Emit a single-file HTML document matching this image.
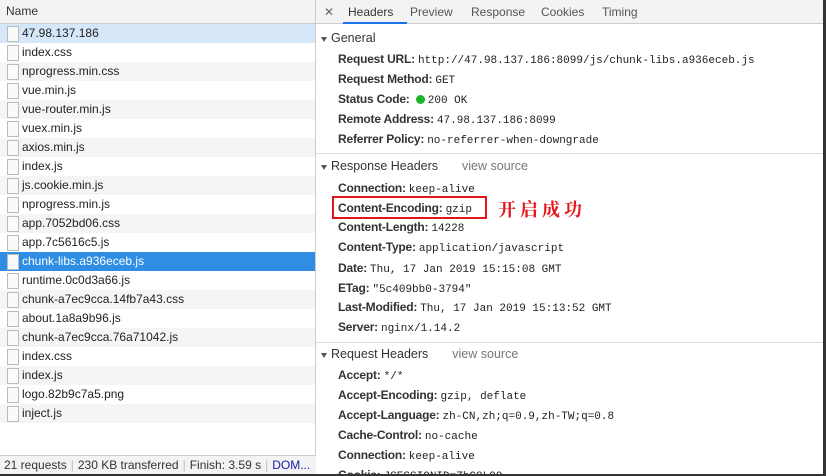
<!DOCTYPE html>
<html><head><meta charset="utf-8"><style>
*{margin:0;padding:0;box-sizing:border-box}
body{width:826px;height:476px;overflow:hidden;background:#fff;font-family:"Liberation Sans",sans-serif;font-size:12px;color:#222;position:relative}
#left{position:absolute;left:0;top:0;width:316px;height:474px;border-right:1px solid #ccc}
#lh{height:24px;background:#f3f3f3;border-bottom:1px solid #ccc;padding:4px 6px;color:#333}
.r{height:19px;line-height:19px;padding-left:22px;position:relative;white-space:nowrap;color:#222}
.r::before{content:"";position:absolute;left:7px;top:2px;width:10px;height:14px;border:1px solid #bbb;background:#fafafa}
.r.s1{background:#d6e7f9}
.r.s2{background:#2f8de4;color:#fff}
#foot{position:absolute;left:0;top:455px;width:316px;height:19px;border-top:1px solid #ccc;background:#f3f3f3;line-height:18px;padding-left:4px;color:#333;white-space:nowrap;overflow:hidden}
#foot i{font-style:normal;color:#bbb;margin:0 4px}
#right{position:absolute;left:316px;top:0;width:507px;height:474px;overflow:hidden}
#tabs{height:24px;background:#f3f3f3;border-bottom:1px solid #ccc;position:relative}
#tabs span{position:absolute;top:5px;color:#555}
#tabs .x{left:8px;color:#666}
#tabs .on{color:#333}
#ul{position:absolute;left:27px;top:22px;width:64px;height:2px;background:#1a73e8}
.st{position:absolute;left:15px;color:#333;font-size:12.5px}
.st::before{content:"";position:absolute;left:-10px;top:6px;border-left:3.5px solid transparent;border-right:3.5px solid transparent;border-top:5px solid #555}
.vs{color:#777;margin-left:24px}
.k{position:absolute;left:22px;white-space:nowrap;color:#333;font-weight:bold;font-size:12px;letter-spacing:-.2px}
.k b{font-family:"Liberation Mono",monospace;font-weight:normal;font-size:11px;color:#222;margin-left:3px;letter-spacing:0}
.hr{position:absolute;left:0;width:507px;height:1px;background:#ddd}
#box{position:absolute;left:332px;top:196px;width:155px;height:23px;border:2px solid #e4141b}
#zh{position:absolute;left:498px;top:196px;color:#e4141b;font-size:18px;font-family:"Noto Serif CJK SC","Noto Sans CJK SC",serif;font-weight:bold;letter-spacing:4px}
.dot{display:inline-block;width:9px;height:9px;border-radius:50%;background:#1fb32a;vertical-align:-1px;margin-right:3px}
#bd{position:absolute;left:0;top:474px;width:826px;height:2px;background:#333}
#rb{position:absolute;left:823px;top:0;width:3px;height:476px;background:#333}
</style></head><body>
<div id="left">
<div id="lh">Name</div>
<div id="list">
<div class="r s1">47.98.137.186</div>
<div class="r" style="background:#fff">index.css</div>
<div class="r" style="background:#f5f5f5">nprogress.min.css</div>
<div class="r" style="background:#fff">vue.min.js</div>
<div class="r" style="background:#f5f5f5">vue-router.min.js</div>
<div class="r" style="background:#fff">vuex.min.js</div>
<div class="r" style="background:#f5f5f5">axios.min.js</div>
<div class="r" style="background:#fff">index.js</div>
<div class="r" style="background:#f5f5f5">js.cookie.min.js</div>
<div class="r" style="background:#fff">nprogress.min.js</div>
<div class="r" style="background:#f5f5f5">app.7052bd06.css</div>
<div class="r" style="background:#fff">app.7c5616c5.js</div>
<div class="r s2">chunk-libs.a936eceb.js</div>
<div class="r" style="background:#fff">runtime.0c0d3a66.js</div>
<div class="r" style="background:#f5f5f5">chunk-a7ec9cca.14fb7a43.css</div>
<div class="r" style="background:#fff">about.1a8a9b96.js</div>
<div class="r" style="background:#f5f5f5">chunk-a7ec9cca.76a71042.js</div>
<div class="r" style="background:#fff">index.css</div>
<div class="r" style="background:#f5f5f5">index.js</div>
<div class="r" style="background:#fff">logo.82b9c7a5.png</div>
<div class="r" style="background:#f5f5f5">inject.js</div>
</div>
<div id="foot">21 requests<i>|</i>230 KB transferred<i>|</i>Finish: 3.59 s<i>|</i><span style="color:#1a1aa6">DOM...</span></div>
</div>
<div id="right">
<div id="tabs"><span class="x">✕</span><span class="on" style="left:32px">Headers</span><span style="left:94px">Preview</span><span style="left:155px">Response</span><span style="left:225px">Cookies</span><span style="left:286px">Timing</span><div id="ul"></div></div>
<div class="st" style="top:31px">General</div>
<div class="k" style="top:52px">Request URL:<b>http://47.98.137.186:8099/js/chunk-libs.a936eceb.js</b></div>
<div class="k" style="top:72px">Request Method:<b>GET</b></div>
<div class="k" style="top:92px">Status Code: <b><span class="dot"></span>200 OK</b></div>
<div class="k" style="top:112px">Remote Address:<b>47.98.137.186:8099</b></div>
<div class="k" style="top:132px">Referrer Policy:<b>no-referrer-when-downgrade</b></div>
<div class="hr" style="top:153px"></div>
<div class="st" style="top:159px">Response Headers<span class="vs">view source</span></div>
<div class="k" style="top:181px">Connection:<b>keep-alive</b></div>
<div class="k" style="top:201px">Content-Encoding:<b>gzip</b></div>
<div class="k" style="top:220px">Content-Length:<b>14228</b></div>
<div class="k" style="top:240px">Content-Type:<b>application/javascript</b></div>
<div class="k" style="top:261px">Date:<b>Thu, 17 Jan 2019 15:15:08 GMT</b></div>
<div class="k" style="top:281px">ETag:<b>"5c409bb0-3794"</b></div>
<div class="k" style="top:300px">Last-Modified:<b>Thu, 17 Jan 2019 15:13:52 GMT</b></div>
<div class="k" style="top:320px">Server:<b>nginx/1.14.2</b></div>
<div class="hr" style="top:342px"></div>
<div class="st" style="top:347px">Request Headers<span class="vs">view source</span></div>
<div class="k" style="top:368px">Accept:<b>*/*</b></div>
<div class="k" style="top:388px">Accept-Encoding:<b>gzip, deflate</b></div>
<div class="k" style="top:408px">Accept-Language:<b>zh-CN,zh;q=0.9,zh-TW;q=0.8</b></div>
<div class="k" style="top:428px">Cache-Control:<b>no-cache</b></div>
<div class="k" style="top:448px">Connection:<b>keep-alive</b></div>
<div class="k" style="top:468px">Cookie:<b>JSESSIONID=ZhC8L99...</b></div>
</div>
<div id="box"></div>
<div id="zh">开启成功</div>
<div id="bd"></div><div id="rb"></div>
</body></html>
